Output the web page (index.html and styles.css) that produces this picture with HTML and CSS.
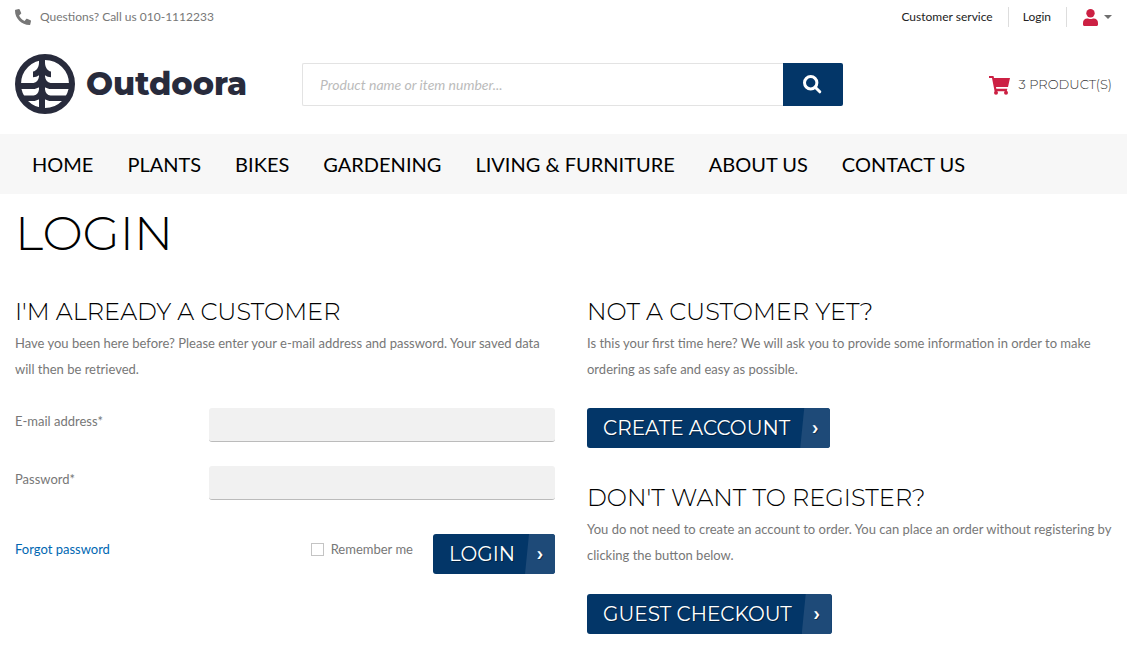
FILE: index.html
```html
<!DOCTYPE html>
<html lang="en">
<head>
  <meta charset="UTF-8">
  <meta name="viewport" content="width=device-width, initial-scale=1.0">
  <title>Login - Outdoora</title>
  <link rel="stylesheet" href="styles.css">
</head>
<body>
  <div class="topbar">
    <div class="phone">
      <svg width="16" height="16" viewBox="0 0 512 512" fill="currentColor" aria-hidden="true"><path transform="matrix(-1 0 0 1 512 0)" d="M493.400 24.600l-104-24c-11.300-2.600-22.900 3.300-27.500 13.900l-48 112c-4.200 9.800-1.400 21.300 6.900 28l60.600 49.600c-36 76.700-98.900 140.500-177.200 177.200l-49.600-60.600c-6.800-8.300-18.200-11.100-28-6.900l-112 48C3.900 366.500-2 378.100.6 389.400l24 104C27.100 504.200 36.700 512 48 512c256.100 0 464-207.500 464-464 0-11.200-7.700-20.900-18.600-23.400z"/></svg>
      <span>Questions? Call us 010-1112233</span>
    </div>
    <div class="links">
      <a href="#">Customer service</a>
      <a href="#">Login</a>
      <button class="account" type="button" aria-label="Account">
        <svg width="15" height="17" viewBox="0 0 15 17" fill="#cc2043"><circle cx="7.500" cy="4.200" r="4.200"/><path d="M0 14.500V14c0-2.800 1.800-4.500 4.300-4.500 1 0 1.600.5 3.200.5s2.200-.5 3.200-.5C13.200 9.500 15 11.200 15 14v1.500c0 .9-.6 1.500-1.500 1.500h-12C.6 17 0 16.400 0 15.500z"/></svg>
        <svg width="8" height="4" viewBox="0 0 8 4" fill="#6f6f6f"><path d="M0 0h8L4 4z"/></svg>
      </button>
    </div>
  </div>

  <header class="header">
    <a class="logo" href="#">
      <svg width="60" height="60" viewBox="0 0 60 60" aria-hidden="true">
        <circle cx="30" cy="30" r="27" fill="none" stroke="#282b3c" stroke-width="6"/>
        <g fill="#282b3c">
          <path d="M24 4h6v52h-6z"/>
          <path d="M24 9h6c.3 4.500 2.500 7.800 6 8.600v5.600c-2.500-.1-4.200-.8-5.300-1.700h-7.400c-1.100.9-2.800 1.600-5.300 1.700v-5.600c3.500-.8 5.700-4.100 6-8.600z"/>
          <path d="M4 29h14.500c3-.4 5-2.700 5.500-6.500h6c.5 3.800 2.500 6.100 5.500 6.500H56v6H36c-2.200 0-4.200-.6-5.500-1.500h-7c-1.300.9-3.300 1.500-5.500 1.500H4z"/>
          <path d="M6 41.500h12.500c3-.4 5-2.300 5.500-6h6c.5 3.700 2.500 5.600 5.500 6H54l-3 5.500H36c-2.200 0-4.200-.6-5.500-1.500h-7c-1.300.9-3.300 1.500-5.500 1.500H9z"/>
        </g>
      </svg>
      <span>Outdoora</span>
    </a>
    <form class="search">
      <input type="text" aria-label="Search" placeholder="Product name or item number...">
      <button type="submit" aria-label="Search">
        <svg width="19" height="19" viewBox="0 0 19 19" fill="none" stroke="#fff" stroke-width="3"><circle cx="7.700" cy="7.700" r="6.200"/><path d="m12.200 12.200 4.600 4.600" stroke-linecap="round"/></svg>
      </button>
    </form>
    <a class="cart" href="#">
      <svg width="21" height="19" viewBox="0 0 21 19" fill="#cc2043"><path d="M0 0h4.500l.5 2h16L19 11H7l.3 1.700h11L18 14.500l-.5.800H5.600L3 2H0z"/><circle cx="7" cy="16.700" r="2"/><circle cx="17" cy="16.700" r="2"/></svg>
      <span>3 PRODUCT(S)</span>
    </a>
  </header>

  <nav class="menu">
    <a href="#">HOME</a>
    <a href="#">PLANTS</a>
    <a href="#">BIKES</a>
    <a href="#">GARDENING</a>
    <a href="#">LIVING &amp; FURNITURE</a>
    <a href="#">ABOUT US</a>
    <a href="#">CONTACT US</a>
  </nav>

  <main>
    <h1>LOGIN</h1>
    <div class="columns">
      <section>
        <h2>I'M ALREADY A CUSTOMER</h2>
        <p>Have you been here before? Please enter your e-mail address and password. Your saved data will then be retrieved.</p>
        <form class="login">
          <div class="field">
            <label for="email">E-mail address*</label>
            <input type="email" id="email" name="email" required>
          </div>
          <div class="field">
            <label for="password">Password*</label>
            <input type="password" id="password" name="password" required>
          </div>
          <div class="actions">
            <a class="forgot" href="#">Forgot password</a>
            <div class="remember">
              <input type="checkbox" id="remember" name="remember">
              <label for="remember">Remember me</label>
            </div>
            <button class="btn" type="submit">LOGIN <span class="arrow">›</span></button>
          </div>
        </form>
      </section>

      <div>
        <section class="option">
          <h2>NOT A CUSTOMER YET?</h2>
          <p>Is this your first time here? We will ask you to provide some information in order to make ordering as safe and easy as possible.</p>
          <button class="btn" type="button">CREATE ACCOUNT <span class="arrow">›</span></button>
        </section>
        <section class="option">
          <h2>DON'T WANT TO REGISTER?</h2>
          <p>You do not need to create an account to order. You can place an order without registering by clicking the button below.</p>
          <button class="btn" type="button">GUEST CHECKOUT <span class="arrow">›</span></button>
        </section>
      </div>
    </div>
  </main>
</body>
</html>
```
FILE: styles.css
```css
* {
  box-sizing: border-box;
}

body {
  margin: 0;
  font-family: Lato, sans-serif;
  font-size: 13px;
  line-height: 26px;
  color: #777;
  background: #fff;
}

a {
  color: inherit;
  text-decoration: none;
}

button {
  border: 0;
  padding: 0;
  font: inherit;
  cursor: pointer;
}

/* Top bar */
.topbar {
  display: flex;
  align-items: center;
  justify-content: space-between;
  height: 34px;
  padding: 0 15px;
  font-size: 12px;
}

.phone {
  display: flex;
  align-items: center;
  gap: 9px;
}

.links {
  display: flex;
  align-items: center;
  line-height: 20px;
  color: #222;
}

.links a {
  padding-right: 15px;
  margin-right: 14px;
  border-right: 1px solid #ddd;
}

.account {
  display: flex;
  align-items: center;
  gap: 6px;
  margin-left: 2px;
  background: none;
}

/* Logo, search and cart */
.header {
  display: flex;
  align-items: center;
  height: 100px;
  padding: 0 15px;
}

.logo {
  display: flex;
  align-items: center;
  gap: 11px;
  width: 287px;
  font-family: Montserrat, sans-serif;
  font-size: 32px;
  line-height: 40px;
  font-weight: 800;
  color: #282b3c;
}

.search {
  display: flex;
  width: 48vw;
  height: 43px;
}

.search input {
  flex: 1;
  min-width: 0;
  padding: 0 17px;
  border: 1px solid #e3e3e3;
  border-right: 0;
  border-radius: 2px 0 0 2px;
  font-family: inherit;
  font-size: 14px;
}

.search input::placeholder {
  font-style: italic;
  color: #bbb;
}

.search button {
  display: flex;
  align-items: center;
  justify-content: center;
  width: 60px;
  border-radius: 0 2px 2px 0;
  background: #033668;
}

.cart {
  display: flex;
  align-items: center;
  gap: 9px;
  margin-left: auto;
  font-family: Montserrat, sans-serif;
  font-weight: 300;
  color: #333;
}

.cart svg {
  margin-top: 3px;
}

/* Main menu */
.menu {
  display: flex;
  flex-wrap: wrap;
  gap: 0 34px;
  padding: 0 32px;
  background: #f7f7f7;
  font-size: 20px;
  line-height: 60px;
  color: #000;
}

/* Page content */
main {
  padding: 10px 0 12px 15px;
}

h1,
h2 {
  margin: 0;
  font-family: Montserrat, sans-serif;
  font-weight: 300;
  color: #000;
}

h1 {
  margin-bottom: 34px;
  font-size: 48px;
  line-height: 58px;
}

h2 {
  margin-bottom: 2px;
  font-size: 24px;
  line-height: 32px;
}

p {
  margin: 0 0 26px;
  padding-right: 15px;
}

.columns {
  display: grid;
  grid-template-columns: 1fr 1fr;
  gap: 32px;
}

.option {
  margin-bottom: 34px;
}

.option:last-child {
  margin-bottom: 0;
}

/* Login form */
.field {
  display: flex;
  margin-bottom: 24px;
}

.field label {
  width: 36%;
}

.field input {
  flex: 1;
  min-width: 0;
  height: 34px;
  padding: 0 10px;
  border: 0;
  border-bottom: 1px solid #bbb;
  border-radius: 3px;
  background: #f1f1f1;
  font: inherit;
}

.actions {
  display: flex;
  align-items: flex-start;
  padding-top: 10px;
  line-height: 30px;
}

.remember {
  display: flex;
  align-items: center;
  margin-right: 20px;
}

.remember input {
  appearance: none;
  width: 13px;
  height: 13px;
  margin: 0 7px 0 0;
  border: 1px solid #c4c4c4;
  background: #fff;
}

.forgot {
  margin-right: auto;
  color: #0067b2;
}

/* Buttons */
.btn {
  display: flex;
  align-items: center;
  gap: 10px;
  height: 40px;
  padding-left: 16px;
  border-radius: 3px;
  overflow: hidden;
  background: #033668;
  color: #fff;
  font-family: Montserrat, sans-serif;
  font-size: 20px;
  font-weight: 400;
  text-shadow: 1px 1px 0 rgba(0, 0, 0, 0.4);
}

.arrow {
  width: 30px;
  line-height: 40px;
  clip-path: polygon(4px 0, 100% 0, 100% 100%, 0 100%);
  background: #1e4a78;
  font-weight: 600;
}
```
